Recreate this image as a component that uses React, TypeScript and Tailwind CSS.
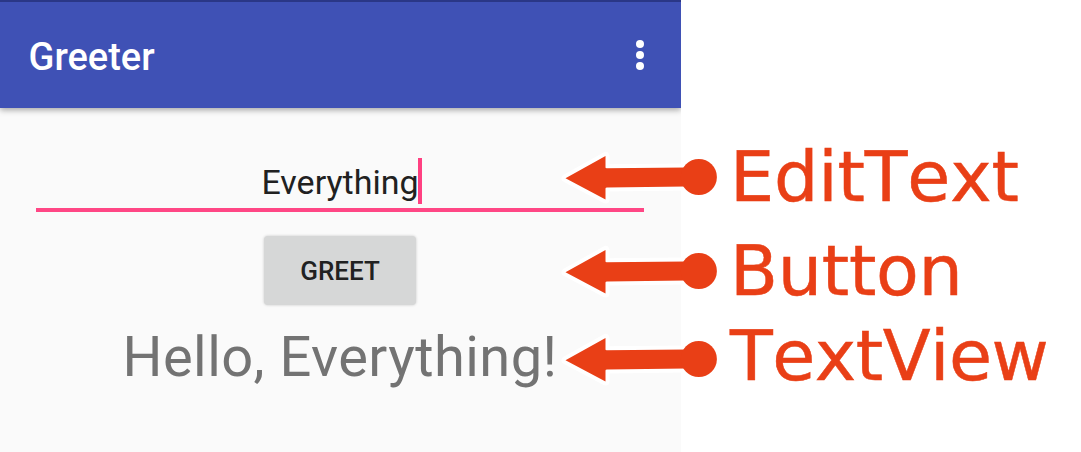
import React from "react";

function Arrow({ label, className, labelClass }: { label: string; className: string; labelClass: string }) {
  return (
    <div className={`absolute flex h-[60px] items-center ${className}`}>
      <svg width="160" height="60" viewBox="0 0 160 60" className="shrink-0 overflow-visible">
        <path d="M5.5 30.3L45.5 8V20.3L126 19.5V38.5L45.5 39.5V51.5Z" fill="#fff" stroke="#fff" strokeWidth="8" strokeLinejoin="round" />
        <circle cx="138.8" cy="29" r="22" fill="#fff" />
        <path d="M5.5 30.3L45.5 8V19.5Q45.5 20.4 47 20.3L126 19.5V38.5L47 39.4Q45.5 39.4 45.5 40.4V51.5Z" fill="#e93f16" />
        <circle cx="138.8" cy="29" r="18.1" fill="#e93f16" />
      </svg>
      <span className={`whitespace-pre text-[70px] leading-none text-[#e93f16] [-webkit-text-stroke:0.5px_#e93f16] [font-kerning:none] ${labelClass}`}>{label}</span>
    </div>
  );
}

export default function App() {
  return (
    <main className="relative h-[452px] w-[1081px] overflow-hidden bg-white font-['Roboto',sans-serif]">
      <section className="flex h-full w-[681px] flex-col overflow-hidden bg-[#fafafa]">
        <header className="flex h-[108px] w-full shrink-0 items-center justify-between border-t-2 border-[#2a3786] bg-[#3f51b5] pl-[28.5px] pr-[36px] text-white shadow-[0_2px_6px_rgba(0,0,0,0.35)]">
          <h1 className="pt-[4px] text-[38px] font-medium">Greeter</h1>
          <svg width="10" height="32" fill="currentColor"><circle cx="5" cy="5" r="4" /><circle cx="5" cy="16" r="4" /><circle cx="5" cy="27" r="4" /></svg>
        </header>
        <div className="flex w-[680px] flex-col items-center">
          <div className="mt-[50px] flex h-[54px] w-[608px] justify-center border-b-4 border-[#ff4785] pl-[2px]">
            <span className="-mr-px h-[46px] border-r-4 border-[#ff4081] text-[34px] leading-[49px] text-[#212121]"><span className="-mr-px">Everything</span></span>
          </div>
          <button className="mt-6 h-[69px] w-[152px] rounded-[4px] bg-[#d6d7d7] pt-[2px] text-[26px] font-medium text-[#212121] shadow-[0_0_3px_rgba(0,0,0,0.2)]">GREET</button>
          <p className="mt-[19px] whitespace-pre text-[56px] leading-[66px] tracking-[0.45px] text-[#737373]">Hello, Everything!</p>
        </div>
      </section>
      <div className="font-['DejaVu_Sans',sans-serif]">
        <Arrow label="EditText" className="left-[560px] top-[148px]" labelClass="ml-[10px] mt-[-3px] tracking-[-0.2px]" />
        <Arrow label="Button" className="left-[560px] top-[242px]" labelClass="ml-[10px] mt-[-3px] tracking-[-0.3px]" />
        <Arrow label="TextView" className="left-[560px] top-[330px]" labelClass="ml-[10px] mt-[-9px] tracking-[-0.5px]" />
      </div>
    </main>
  );
}
